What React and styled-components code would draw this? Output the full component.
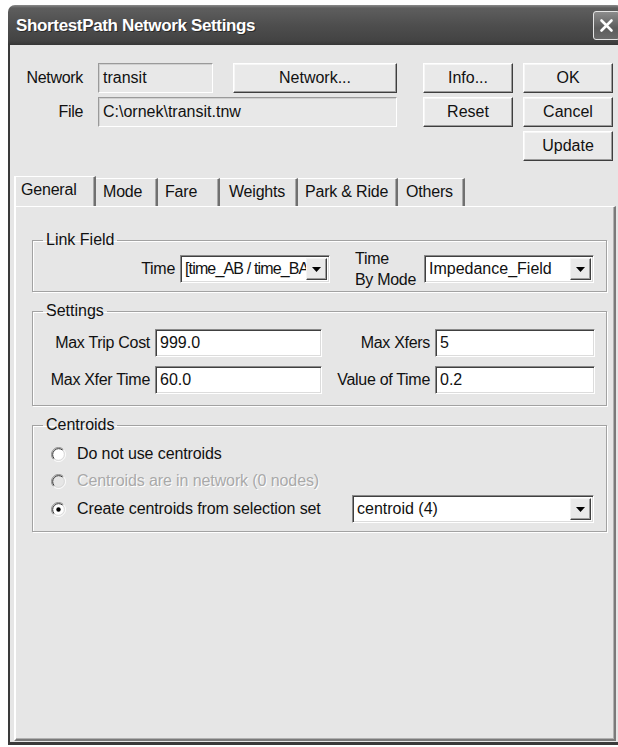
import React from "react";
import styled, { createGlobalStyle } from "styled-components";

const GlobalStyle = createGlobalStyle`
  html, body {
    margin: 0;
    padding: 0;
    background: #ffffff;
    overflow: hidden;
  }
  body {
    font-family: "Liberation Sans", Arial, sans-serif;
  }
`;

const FONT = `"Liberation Sans", Arial, sans-serif`;

const Page = styled.div`
  box-sizing: border-box;
  width: 618px;
  height: 747px;
  padding: 5px 0 0 8px;
  overflow: hidden;
`;

const Window = styled.div`
  width: 615px;
  height: 740px;
  display: flex;
  flex-direction: column;
  border-radius: 7px 7px 0 0;
  overflow: hidden;
  background: #e6e6e6;
`;

const TitleBar = styled.div`
  flex: 0 0 40px;
  display: flex;
  align-items: center;
  padding: 0 3px 0 8px;
  background: linear-gradient(
    to bottom,
    #8a8a8a 0px,
    #5e5e5e 3px,
    #4e4e4e 50%,
    #434343 90%,
    #363636 100%
  );
`;

const Title = styled.span`
  color: #ffffff;
  font: bold 17px ${FONT};
  letter-spacing: -0.35px;
  text-shadow: 1px 1px 0 #2a2a2a;
  margin-top: 2px;
`;

const CloseButton = styled.div`
  margin-left: auto;
  width: 25px;
  height: 27px;
  display: flex;
  align-items: center;
  justify-content: center;
  border: 1px solid #e4e4e4;
  border-radius: 3px;
  background: linear-gradient(to bottom, #8c8c8c, #5c5c5c 60%, #6a6a6a);
`;

const Frame = styled.div`
  flex: 1;
  display: flex;
  flex-direction: column;
  border-left: 2px solid #3a3a3a;
  border-right: 3px solid #3a3a3a;
  border-bottom: 3px solid #3a3a3a;
  padding: 18px 4px 1px 4px;
  min-height: 0;
`;

const TopGrid = styled.div`
  display: grid;
  grid-template-columns: 69px 15px 115px 20px 164px 26px 90px 10px 90px;
  grid-template-rows: 30px 30px 30px;
  row-gap: 4px;
  align-items: center;
`;

const FieldLabel = styled.span`
  grid-column: 1;
  grid-row: ${(p) => p.row};
  text-align: right;
  font: 16px ${FONT};
  letter-spacing: -0.3px;
  color: #111;
`;

const ReadField = styled.div`
  grid-column: ${(p) => p.col};
  grid-row: ${(p) => p.row};
  box-sizing: border-box;
  height: 30px;
  display: flex;
  align-items: center;
  padding-left: 4px;
  font: 16px ${FONT};
  color: #111;
  background: #e8e8e8;
  border: 1px solid;
  border-color: #9a9a9a #ffffff #ffffff #9a9a9a;
  box-shadow: inset 1px 1px 0 #d0d0d0;
`;

const Button = styled.button`
  grid-column: ${(p) => p.col};
  grid-row: ${(p) => p.row};
  box-sizing: border-box;
  height: 30px;
  padding: 0;
  font: 16px ${FONT};
  color: #111;
  background: #e9e9e9;
  border: 1px solid;
  border-color: #ffffff #3e3e3e #3e3e3e #ffffff;
  box-shadow: inset -1px -1px 0 #9c9c9c, inset 1px 1px 0 #f6f6f6;
`;

const TabStrip = styled.div`
  display: flex;
  align-items: flex-end;
  height: 30px;
  margin-top: 15px;
`;

const Tab = styled.div`
  box-sizing: border-box;
  width: ${(p) => p.w}px;
  height: ${(p) => (p.active ? 30 : 28)}px;
  display: flex;
  align-items: center;
  padding-left: ${(p) => p.pad || 7}px;
  padding-bottom: ${(p) => (p.active ? 3 : 1)}px;
  font: 16px ${FONT};
  letter-spacing: -0.2px;
  color: #111;
  border-top: 1px solid #ffffff;
  border-left: ${(p) => (p.first ? "2px solid #ffffff" : "none")};
  border-right: 2px solid #707070;
  box-shadow: inset -1px 0 0 #a8a8a8;
`;

const Panel = styled.div`
  flex: 1;
  display: flex;
  flex-direction: column;
  gap: 10px;
  padding: 24px 7px 0 16px;
  border-top: 1px solid #ffffff;
  border-left: 2px solid #ffffff;
  border-right: 2px solid #7a7a7a;
  border-bottom: 2px solid #7a7a7a;
  box-shadow: inset -1px -1px 0 #b0b0b0;
`;

const Group = styled.fieldset`
  margin: 0;
  padding: ${(p) => p.pad};
  border: 1px solid #a2a2a2;
  box-shadow: inset 1px 1px 0 #ffffff, 1px 1px 0 #ffffff;
  min-width: 0;
`;

const Legend = styled.legend`
  margin-left: 4px;
  padding: 0 3px;
  font: 16px/18px ${FONT};
  color: #111;
`;

const LinkRow = styled.div`
  display: flex;
  align-items: center;
  height: 40px;
`;

const InlineLabel = styled.span`
  box-sizing: border-box;
  width: ${(p) => p.w}px;
  margin-left: ${(p) => p.ml || 0}px;
  padding-right: ${(p) => p.pr || 0}px;
  text-align: ${(p) => p.align || "right"};
  white-space: nowrap;
  font: 16px/${(p) => p.lh || 18}px ${FONT};
  letter-spacing: -0.3px;
  color: #111;
`;

const Select = styled.div`
  box-sizing: border-box;
  width: ${(p) => p.w}px;
  height: 28px;
  margin-left: ${(p) => (p.auto ? "auto" : `${p.ml || 0}px`)};
  margin-right: ${(p) => p.mr || 0}px;
  display: flex;
  background: #ffffff;
  border: 1px solid;
  border-color: #8a8a8a #ffffff #ffffff #8a8a8a;
  box-shadow: inset 1px 1px 0 #404040, inset -1px -1px 0 #dcdcdc;
  padding: 2px;
`;

const SelectText = styled.span`
  flex: 1;
  min-width: 0;
  overflow: hidden;
  white-space: nowrap;
  padding-left: 2px;
  font: 16px/22px ${FONT};
  letter-spacing: ${(p) => (p.tight ? "-0.85px" : "0")};
  color: #111;
`;

const SelectArrow = styled.span`
  box-sizing: border-box;
  flex: 0 0 21px;
  display: flex;
  align-items: center;
  justify-content: center;
  background: #e9e9e9;
  border: 1px solid;
  border-color: #f4f4f4 #404040 #404040 #f4f4f4;
  box-shadow: inset -1px -1px 0 #9c9c9c;
`;

const SettingsGrid = styled.div`
  display: grid;
  grid-template-columns: 116px 167px 113px 160px;
  grid-template-rows: 28px 28px;
  row-gap: 9px;
  align-items: center;
`;

const TextInput = styled.div`
  box-sizing: border-box;
  height: 28px;
  display: flex;
  align-items: center;
  padding-left: 4px;
  font: 16px ${FONT};
  color: #111;
  background: #ffffff;
  border: 1px solid;
  border-color: #8a8a8a #ffffff #ffffff #8a8a8a;
  box-shadow: inset 1px 1px 0 #404040, inset -1px -1px 0 #dcdcdc;
`;

const RadioList = styled.div`
  display: flex;
  flex-direction: column;
  gap: 1px;
`;

const RadioRow = styled.div`
  display: flex;
  align-items: center;
  height: ${(p) => p.h || 26}px;
  padding-left: 12px;
`;

const RadioText = styled.span`
  margin-left: 11px;
  font: 16px ${FONT};
  letter-spacing: -0.1px;
  color: ${(p) => (p.disabled ? "#a9a9a9" : "#111")};
  text-shadow: ${(p) => (p.disabled ? "1px 1px 0 #ffffff" : "none")};
`;

const DownArrow = () => (
  <svg width="9" height="5" viewBox="0 0 9 5">
    <path d="M0 0 H9 L4.5 5 Z" fill="#000" />
  </svg>
);

const CloseIcon = () => (
  <svg width="15" height="15" viewBox="0 0 15 15">
    <path
      d="M2.5 2.5 L12.5 12.5 M12.5 2.5 L2.5 12.5"
      stroke="#ffffff"
      strokeWidth="2.6"
      strokeLinecap="round"
    />
  </svg>
);

// classic sunken radio circle: dark upper-left arcs, light lower-right arcs
const RadioMark = ({ checked, disabled }) => (
  <svg width="15" height="15" viewBox="0 0 15 15">
    <circle cx="7.5" cy="7.5" r="6" fill={disabled ? "#e6e6e6" : "#ffffff"} />
    <path d="M2.55 12.45 A7 7 0 0 1 12.45 2.55" fill="none" stroke="#8a8a8a" strokeWidth="1" />
    <path d="M3.26 11.74 A6 6 0 0 1 11.74 3.26" fill="none" stroke="#3a3a3a" strokeWidth="1" />
    <path d="M12.45 2.55 A7 7 0 0 1 2.55 12.45" fill="none" stroke="#ffffff" strokeWidth="1" />
    <path d="M11.74 3.26 A6 6 0 0 1 3.26 11.74" fill="none" stroke="#d8d8d8" strokeWidth="1" />
    {checked && <circle cx="7.5" cy="7.5" r="2.2" fill="#000" />}
  </svg>
);

const Dropdown = ({ value, tight, ...rest }) => (
  <Select {...rest}>
    <SelectText tight={tight}>{value}</SelectText>
    <SelectArrow>
      <DownArrow />
    </SelectArrow>
  </Select>
);

const tabs = [
  { label: "General", w: 82, pad: 5, active: true, first: true },
  { label: "Mode", w: 62 },
  { label: "Fare", w: 62 },
  { label: "Weights", w: 78, pad: 9 },
  { label: "Park & Ride", w: 100 },
  { label: "Others", w: 67, pad: 8 },
];

export default function App() {
  return (
    <>
      <GlobalStyle />
      <Page>
        <Window>
          <TitleBar>
            <Title>ShortestPath Network Settings</Title>
            <CloseButton>
              <CloseIcon />
            </CloseButton>
          </TitleBar>
          <Frame>
            <TopGrid>
              <FieldLabel row={1}>Network</FieldLabel>
              <ReadField col={3} row={1}>transit</ReadField>
              <Button col={5} row={1}>Network...</Button>
              <Button col={7} row={1}>Info...</Button>
              <Button col={9} row={1}>OK</Button>
              <FieldLabel row={2}>File</FieldLabel>
              <ReadField col="3 / span 3" row={2}>C:\ornek\transit.tnw</ReadField>
              <Button col={7} row={2}>Reset</Button>
              <Button col={9} row={2}>Cancel</Button>
              <Button col={9} row={3}>Update</Button>
            </TopGrid>

            <TabStrip>
              {tabs.map((t) => (
                <Tab key={t.label} w={t.w} pad={t.pad} active={t.active} first={t.first}>
                  {t.label}
                </Tab>
              ))}
            </TabStrip>

            <Panel>
              <Group pad="0 10px 2px 6px">
                <Legend>Link Field</Legend>
                <LinkRow>
                  <InlineLabel w={141} pr={5}>Time</InlineLabel>
                  <Dropdown w={150} tight value="[time_AB / time_BA" />
                  <InlineLabel w={64} ml={25} align="left" lh={21}>
                    Time
                    <br />
                    By Mode
                  </InlineLabel>
                  <Dropdown w={170} ml={5} value="Impedance_Field" />
                </LinkRow>
              </Group>

              <Group pad="9px 10px 11px 6px">
                <Legend>Settings</Legend>
                <SettingsGrid>
                  <InlineLabel w={116} pr={5}>Max Trip Cost</InlineLabel>
                  <TextInput>999.0</TextInput>
                  <InlineLabel w={113} pr={5}>Max Xfers</InlineLabel>
                  <TextInput>5</TextInput>
                  <InlineLabel w={116} pr={5}>Max Xfer Time</InlineLabel>
                  <TextInput>60.0</TextInput>
                  <InlineLabel w={113} pr={5}>Value of Time</InlineLabel>
                  <TextInput>0.2</TextInput>
                </SettingsGrid>
              </Group>

              <Group pad="7px 10px 8px 6px">
                <Legend>Centroids</Legend>
                <RadioList>
                  <RadioRow>
                    <RadioMark />
                    <RadioText>Do not use centroids</RadioText>
                  </RadioRow>
                  <RadioRow>
                    <RadioMark disabled />
                    <RadioText disabled>Centroids are in network (0 nodes)</RadioText>
                  </RadioRow>
                  <RadioRow h={28}>
                    <RadioMark checked />
                    <RadioText>Create centroids from selection set</RadioText>
                    <Dropdown w={242} auto mr={2} value="centroid (4)" />
                  </RadioRow>
                </RadioList>
              </Group>
            </Panel>
          </Frame>
        </Window>
      </Page>
    </>
  );
}
